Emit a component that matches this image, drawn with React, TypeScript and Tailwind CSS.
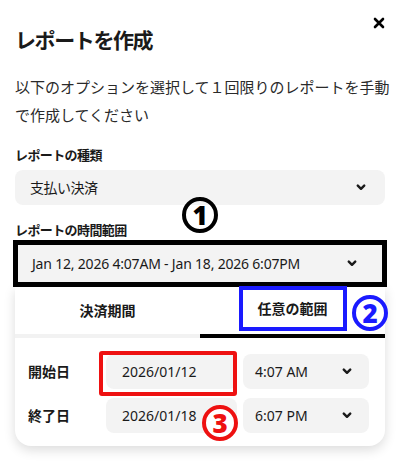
import React from "react";

const font = { fontFamily: '"Noto Sans", "Noto Sans CJK JP", sans-serif' };

function Chevron() {
    return (
        <svg width="10" height="7" viewBox="0 0 10 7" fill="none">
            <path d="M1.8 1.6L5 4.8L8.2 1.6" stroke="#1a1a1a" strokeWidth="2.4" strokeLinecap="round" strokeLinejoin="round" />
        </svg>
    );
}

function Badge({ n, className }: { n: string; className: string }) {
    return (
        <div className={"absolute flex h-[36px] w-[36px] items-center justify-center rounded-full border-[4px] text-[26px] leading-none font-black " + className}>
            {n}
        </div>
    );
}

export default function App() {
    return (
        <div className="relative h-[461px] w-[400px] overflow-hidden bg-white text-[#1a1a1a]" style={font}>
            {/* close */}
            <button className="absolute top-[17px] right-[15px]">
                <svg width="12" height="12" viewBox="0 0 12 12">
                    <path d="M2 2L10 10M10 2L2 10" stroke="#000" strokeWidth="2.6" strokeLinecap="round" />
                </svg>
            </button>

            <div className="px-[15px] pt-[25px]">
                <h1 className="text-[21px] leading-[30px] font-bold tracking-[-1.4px]">レポートを作成</h1>
                <p className="mt-[18px] w-[380px] text-[15px] leading-[28px] text-[#2a2a2a]">
                    以下のオプションを選択して１回限りのレポートを手動で作成してください
                </p>

                <div className="mt-[16px] text-[13px] leading-[20px] font-bold tracking-[-0.6px]">レポートの種類</div>
                <div className="mt-[5px] flex h-[35px] items-center justify-between rounded-lg bg-[#f3f3f3] pr-[19px] pl-[15px]">
                    <span className="text-[14px] tracking-[-0.5px]">支払い決済</span>
                    <Chevron />
                </div>

                <div className="mt-[15px] text-[13px] leading-[20px] font-bold tracking-[-0.6px]">レポートの時間範囲</div>
                <div className="-ml-[2px] flex h-[47px] w-[374px] items-center justify-between border-[5px] border-black bg-[#f3f3f3] pr-[25px] pl-[14px]">
                    <span className="text-[14px] tracking-[-0.2px]">Jan 12, 2026 4:07AM - Jan 18, 2026 6:07PM</span>
                    <Chevron />
                </div>

                {/* dropdown panel */}
                <div className="rounded-b-2xl bg-white pb-[13px] shadow-[0_4px_12px_rgba(0,0,0,0.14)]">
                    <div className="grid grid-cols-2">
                        <div className="flex h-[51px] items-center justify-center border-b-[4px] border-[#f2f2f2] text-[14px] font-bold">
                            決済期間
                        </div>
                        <div className="flex h-[51px] items-end justify-center border-b-[4px] border-black pb-[3px]">
                            <span className="flex h-[45px] items-center border-[4px] border-[#1a1aff] px-[15px] text-[14px] font-bold">
                                任意の範囲
                            </span>
                        </div>
                    </div>

                    <div className="flex flex-col gap-[9px] pt-[16px] pr-[16px] pl-[13px]">
                        <div className="flex items-center">
                            <span className="w-[78px] text-[14px] font-bold">開始日</span>
                            <div className="relative flex h-[35px] w-[131px] items-center rounded-lg bg-[#f3f3f3] pl-[16px] text-[14px]">
                                2026/01/12
                                <div className="absolute -top-[3px] -left-[7px] h-[45px] w-[138px] rounded-[3px] border-[4px] border-[#ee1111]" />
                            </div>
                            <div className="ml-[6px] flex h-[35px] flex-1 items-center justify-between rounded-lg bg-[#f3f3f3] pr-[17px] pl-[12px] text-[14px]">
                                4:07 AM
                                <Chevron />
                            </div>
                        </div>
                        <div className="flex items-center">
                            <span className="w-[78px] text-[14px] font-bold">終了日</span>
                            <div className="flex h-[35px] w-[131px] items-center rounded-lg bg-[#f3f3f3] pl-[16px] text-[14px]">
                                2026/01/18
                            </div>
                            <div className="ml-[6px] flex h-[35px] flex-1 items-center justify-between rounded-lg bg-[#f3f3f3] pr-[17px] pl-[12px] text-[14px]">
                                6:07 PM
                                <Chevron />
                            </div>
                        </div>
                    </div>
                </div>
            </div>

            {/* annotations */}
            <Badge n="1" className="top-[197px] left-[182px] border-black text-black" />
            <Badge n="2" className="top-[295px] left-[352px] border-[#1a1aff] text-[#1a1aff]" />
            <Badge n="3" className="top-[405px] left-[202px] border-[#ee1111] bg-white text-[#ee1111]" />
        </div>
    );
}
